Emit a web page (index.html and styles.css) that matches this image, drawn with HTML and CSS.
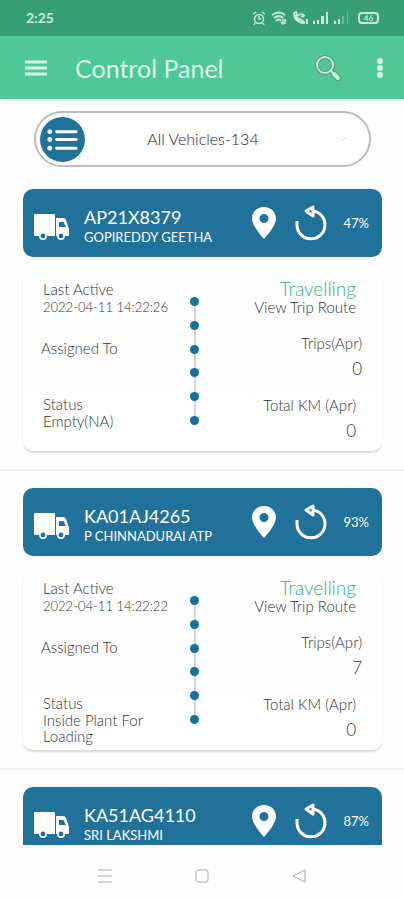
FILE: index.html
```
<!DOCTYPE html>
<html lang="en">
<head>
<meta charset="utf-8">
<meta name="viewport" content="width=device-width, initial-scale=1">
<title>Control Panel</title>
<link rel="stylesheet" href="styles.css">
</head>
<body>
<svg class="sprite" aria-hidden="true">
  <symbol id="truck" viewBox="0 0 36 26">
    <path fill="currentColor" d="M1 0h19q1 0 1 1v21H1q-1 0-1-1V1q0-1 1-1zM22 4h7q2 0 3 2l2 6q1 2 1 4v5q0 1-1 1H22zM25 8v5h7l-2-4q0-1-1-1z" fill-rule="evenodd"/>
    <g fill="#20729b" stroke="currentColor" stroke-width="1.500"><circle cx="9" cy="22" r="3.200"/><circle cx="27" cy="22" r="3.200"/></g>
  </symbol>
  <symbol id="pin" viewBox="0 0 24 32">
    <path fill="currentColor" fill-rule="evenodd" d="M12 0C5.300 0 0 5 0 11.500 0 19.500 12 32 12 32s12-12.500 12-20.500C24 5 18.700 0 12 0zm0 7a4.500 4.500 0 1 1 0 9 4.500 4.500 0 0 1 0-9z"/>
  </symbol>
  <symbol id="replay" viewBox="0 0 34 36">
    <path fill="none" stroke="currentColor" stroke-width="3" d="M3 16v4a14 14 0 1 0 16-14"/>
    <path fill="none" stroke="currentColor" stroke-width="3" stroke-linejoin="round" d="M12 6l7-4v9z"/>
  </symbol>
</svg>

<div class="status-bar">
  <span class="clock">2:25</span>
  <svg width="14" height="14" viewBox="0 0 14 14" fill="none" stroke="currentColor" stroke-width="1.500"><circle cx="7" cy="8" r="4.500"/><path d="M1 3l3-2M13 3l-3-2M7 5v3h2M3 12l-1 2M11 12l1 2"/></svg>
  <svg width="16" height="14" viewBox="0 0 16 14" fill="none" stroke="currentColor" stroke-width="2"><path d="M1 4q7-5 13 0M3 7q5-4 9 0M5 10q3-3 5 0"/><path stroke-width="1.500" d="M12 8v5l-2-2M14 13V8l1 2"/></svg>
  <svg width="16" height="14" viewBox="0 0 16 14" fill="none" stroke="currentColor" stroke-width="1.500"><path stroke-width="2" d="M2 2q0 8 8 10l1-2-3-2-1 1-3-4 1-1-1-3z"/><path d="M6 5q3-4 7 0M9 6q2-2 3 0"/><path stroke-width="2" d="M12 13v-3M15 13V8"/></svg>
  <svg width="16" height="12" viewBox="0 0 16 12" fill="currentColor"><path d="M0 9h2v3H0zM4 8h2v4H4zM8 4h3v8H8zM13 0h2v12h-2z"/></svg>
  <svg width="16" height="12" viewBox="0 0 16 12" fill="currentColor"><path d="M0 9h2v3H0zM4 7h2v5H4z"/><path opacity=".35" d="M8 4h2v8H8zM13 0h1v12h-1z"/></svg>
  <span class="battery">46</span>
</div>

<header class="app-bar">
  <button class="icon-button" aria-label="Open menu"><svg width="22" height="16" viewBox="0 0 22 16" stroke="currentColor" stroke-width="3"><path d="M0 2h22M0 8h22M0 14h22"/></svg></button>
  <h1>Control Panel</h1>
  <button class="icon-button" aria-label="Search"><svg width="28" height="28" viewBox="0 0 28 28" fill="none" stroke-linecap="round"><g stroke="#5f8f7b"><circle cx="11" cy="11" r="8" stroke-width="4"/><path stroke-width="6" d="M20 20l4 4"/><path stroke-width="4" d="M17 17l3 3"/></g><g stroke="#c9eedc"><circle cx="11" cy="11" r="8" stroke-width="2"/><path stroke-width="4" d="M20 20l4 4"/><path stroke-width="2" d="M17 17l3 3"/></g></svg></button>
  <button class="icon-button" aria-label="More options"><svg width="6" height="20" viewBox="0 0 6 20" fill="currentColor"><circle cx="3" cy="3" r="3"/><circle cx="3" cy="10" r="3"/><circle cx="3" cy="17" r="3"/></svg></button>
</header>

<main>
  <div class="filter">
    <svg class="list-badge" viewBox="0 0 46 46" aria-hidden="true"><circle cx="23" cy="23" r="23" fill="#20729b"/><g fill="#fff"><circle cx="10" cy="15" r="2.500"/><circle cx="10" cy="23" r="2.500"/><circle cx="10" cy="32" r="2.500"/></g><path stroke="#fff" stroke-width="3" stroke-linecap="round" d="M17 15h20M17 23h20M17 32h20"/></svg>
    <select aria-label="Vehicle filter"><option>All Vehicles-134</option></select>
    <svg class="chevron" width="10" height="6" viewBox="0 0 10 6" aria-hidden="true"><path fill="none" stroke="#dcdcdc" d="M1 1l4 4 4-4"/></svg>
  </div>

  <article class="vehicle">
    <header class="vehicle-head">
      <svg class="truck"><use href="#truck"/></svg>
      <div class="names"><h2>AP21X8379</h2><p>GOPIREDDY GEETHA</p></div>
      <button aria-label="Show location"><svg class="pin"><use href="#pin"/></svg></button>
      <button aria-label="Replay trip"><svg class="replay"><use href="#replay"/></svg></button>
      <span class="percent">47%</span>
    </header>
    <div class="panel">
      <div class="details">
        <div><p>Last Active</p><p class="date">2022-04-11 14:22:26</p></div>
        <div class="assigned"><p>Assigned To</p></div>
        <div><p>Status</p><p class="state">Empty(NA)</p></div>
      </div>
      <div class="timeline"><i></i><i></i><i></i><i></i><i></i><i></i></div>
      <div class="totals">
        <div><p class="moving">Travelling</p><a href="#route">View Trip Route</a></div>
        <div class="trips"><p>Trips(Apr)</p><p class="count">0</p></div>
        <div class="distance"><p>Total KM (Apr)</p><p class="count">0</p></div>
      </div>
    </div>
  </article>

  <article class="vehicle">
    <header class="vehicle-head">
      <svg class="truck"><use href="#truck"/></svg>
      <div class="names"><h2>KA01AJ4265</h2><p>P CHINNADURAI ATP</p></div>
      <button aria-label="Show location"><svg class="pin"><use href="#pin"/></svg></button>
      <button aria-label="Replay trip"><svg class="replay"><use href="#replay"/></svg></button>
      <span class="percent">93%</span>
    </header>
    <div class="panel">
      <div class="details">
        <div><p>Last Active</p><p class="date">2022-04-11 14:22:22</p></div>
        <div class="assigned"><p>Assigned To</p></div>
        <div><p>Status</p><p class="state">Inside Plant For Loading</p></div>
      </div>
      <div class="timeline"><i></i><i></i><i></i><i></i><i></i><i></i></div>
      <div class="totals">
        <div><p class="moving">Travelling</p><a href="#route">View Trip Route</a></div>
        <div class="trips"><p>Trips(Apr)</p><p class="count">7</p></div>
        <div class="distance"><p>Total KM (Apr)</p><p class="count">0</p></div>
      </div>
    </div>
  </article>

  <article class="vehicle">
    <header class="vehicle-head">
      <svg class="truck"><use href="#truck"/></svg>
      <div class="names"><h2>KA51AG4110</h2><p>SRI LAKSHMI</p></div>
      <button aria-label="Show location"><svg class="pin"><use href="#pin"/></svg></button>
      <button aria-label="Replay trip"><svg class="replay"><use href="#replay"/></svg></button>
      <span class="percent">87%</span>
    </header>
  </article>
</main>

<nav class="system-nav">
  <button aria-label="Recent apps"><svg width="14" height="14" viewBox="0 0 14 14"><path d="M0 1h14M0 7h14M0 13h14"/></svg></button>
  <button aria-label="Home"><svg width="14" height="14" viewBox="0 0 14 14"><rect x="1" y="1" width="12" height="12" rx="2"/></svg></button>
  <button aria-label="Back"><svg width="14" height="14" viewBox="0 0 14 14"><path stroke-linejoin="round" d="M1 7l12-6v12z"/></svg></button>
</nav>
</body>
</html>
```
FILE: styles.css
```
* { box-sizing: border-box; margin: 0; padding: 0; }

body {
  display: flex;
  flex-direction: column;
  height: 100vh;
  background: #fefefe;
  color: #333;
  font: 15px/18px Lato, "Open Sans", sans-serif;
}

button {
  display: block;
  border: 0;
  background: none;
  color: inherit;
  font: inherit;
}

svg { display: block; flex: none; }
.sprite { position: absolute; width: 0; height: 0; }

.status-bar {
  display: flex;
  flex: none;
  align-items: center;
  gap: 5px;
  height: 36px;
  padding: 0 25px 0 26px;
  background: #389e77;
  color: #c8eadb;
}
.clock { margin-right: auto; font-size: 14px; font-weight: 700; }
.battery {
  width: 21px;
  margin-left: 3px;
  border: 2px solid;
  border-radius: 4px;
  font-size: 8px;
  line-height: 8px;
  font-weight: 700;
  text-align: center;
}

.app-bar {
  z-index: 1;
  display: flex;
  flex: none;
  align-items: center;
  height: 63px;
  padding: 0 21px 0 25px;
  background: #50c799;
  color: #d7f8e9;
  box-shadow: 0 1px 4px #00000022;
}
.app-bar h1 {
  flex: 1;
  margin-left: 28px;
  font-size: 25px;
  line-height: 30px;
  font-weight: 400;
}
.icon-button:last-child { margin-left: 35px; }

main { flex: 1; min-height: 0; overflow: hidden; }

.filter {
  display: flex;
  align-items: center;
  height: 56px;
  margin: 12px 33px 5px 34px;
  padding: 0 22px 0 4px;
  border: 2px solid #bdbdbd;
  border-radius: 28px;
  background: #fff;
}
.list-badge { width: 45px; height: 45px; }
.filter select {
  flex: 1;
  min-width: 0;
  margin-right: 16px;
  appearance: none;
  border: 0;
  background: none;
  color: #222;
  font: 300 16px/24px Lato, "Open Sans", sans-serif;
  text-align: center;
  text-align-last: center;
}

.vehicle { padding: 17px 22px 18px 23px; }
.vehicle + .vehicle { border-top: 2px solid #f0f0f0; }

.vehicle-head {
  display: flex;
  align-items: center;
  height: 68px;
  padding: 0 13px 0 11px;
  border-radius: 10px;
  background: #20729b;
  color: #fff;
}
.truck { width: 36px; height: 26px; margin-top: 8px; }
.names { flex: 1; min-width: 0; margin: 8px 0 0 14px; }
.names h2 { font-size: 18px; line-height: 20px; font-weight: 400; }
.names p { font-size: 13px; line-height: 20px; white-space: nowrap; }
.pin { width: 24px; height: 32px; }
.replay { width: 34px; height: 36px; margin-left: 18px; }
.percent { width: 41px; text-align: right; font-size: 13px; }

.panel {
  display: flex;
  height: 180px;
  margin-top: 14px;
  padding: 9px 20px 0 18px;
  border-radius: 10px;
  background: linear-gradient(#fefefe, #fff);
  box-shadow: 0 2px 2px #00000024, 0 0 1px #00000018;
  font-weight: 300;
}
.details {
  display: flex;
  flex: 1;
  flex-direction: column;
  gap: 23px;
}
.details > div { padding-left: 2px; }
.details > .assigned { min-height: 33px; padding-left: 0; }
.date { font-size: 13px; white-space: nowrap; }
.state { max-width: 120px; line-height: 16px; }

.timeline {
  display: flex;
  flex-direction: column;
  justify-content: space-between;
  align-items: center;
  width: 9px;
  height: 128px;
  margin: 17px 14px 0 0;
  background: linear-gradient(#d5d5d5, #d5d5d5) center / 2px 100% no-repeat;
}
.timeline i { width: 9px; height: 9px; border-radius: 50%; background: #17719d; }

.totals {
  display: flex;
  flex: 1;
  flex-direction: column;
  gap: 18px;
  text-align: right;
}
.totals > div { padding-right: 6px; }
.totals > .trips { padding-right: 0; }
.totals a { color: inherit; text-decoration: none; }
.moving { color: #2fb486; font-size: 19px; line-height: 18px; }
.count { margin-top: 8px; font-size: 17px; }

.system-nav {
  display: flex;
  flex: none;
  justify-content: center;
  align-items: center;
  gap: 83px;
  height: 55px;
  padding-top: 6px;
}
.system-nav svg { fill: none; stroke: #aaa; stroke-width: 1; }
```
